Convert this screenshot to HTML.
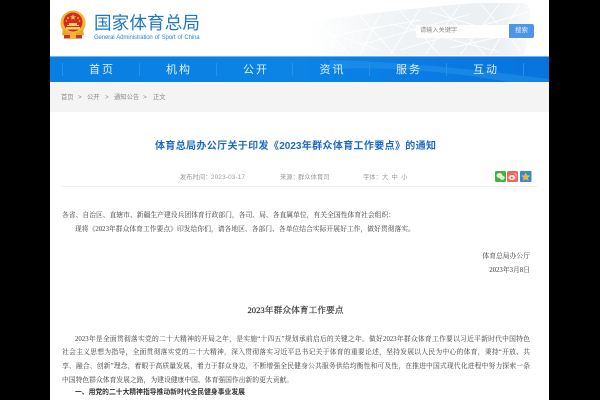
<!DOCTYPE html>
<html lang="zh"><head><meta charset="utf-8">
<style>
html,body{margin:0;padding:0;background:#000;width:600px;height:400px;overflow:hidden}
#p{position:absolute;left:50px;top:0;width:499px;height:400px;background:#fff;overflow:hidden}
.a{position:absolute;white-space:nowrap;line-height:1}
.s{font-family:"Liberation Sans","Noto Sans CJK SC",sans-serif}
.f{font-family:"Liberation Serif","Noto Serif CJK SC",serif;color:#3a3a3a;font-size:6.8px}
.j{text-align:justify;text-align-last:justify;white-space:normal}
.n{top:64.500px;width:40px;text-align:center;color:#e3f0fc;font-size:11px;letter-spacing:2px;text-indent:2px;font-family:"Liberation Sans","Noto Sans CJK SC",sans-serif}
.sep{position:absolute;top:63px;width:1px;height:13px;background:#2c91e6}
.b{top:94.500px;font-size:6.300px;color:#8a8a8a}
.m{top:174.500px;font-size:6.300px;color:#999}
</style></head><body>
<div id="p">
<svg class="a" style="left:250px;top:0" width="249" height="56" viewBox="0 0 249 56">
<defs><linearGradient id="g" x1="0" x2="1" y1="0" y2="0"><stop offset="0" stop-color="#fff"/><stop offset=".4" stop-color="#eff3f5"/><stop offset=".85" stop-color="#ebeff2"/><stop offset="1" stop-color="#f8f9fa"/></linearGradient></defs>
<path d="M8 22Q90 10 175 3L222 3Q232 4 230 18L224 55L10 55Z" fill="url(#g)"/>
<g stroke="#fff" stroke-width=".9" fill="none">
<path d="M20 24L50 55M40 20L30 55M60 16L95 55M80 14L60 55M100 11L140 55M120 9L90 55M140 7L185 55M160 5L125 55M180 3L220 50M200 3L160 55M220 4L190 55M30 36L120 20M60 45L170 14M100 50L228 12M150 48L230 30M20 30L80 50M90 24L200 52M130 12L225 40"/>
</g></svg>
<svg class="a" style="left:10px;top:10px" width="27" height="30" viewBox="0 0 27 30">
<circle cx="13" cy="13" r="12.500" fill="#f2b632"/><circle cx="13" cy="12" r="9.500" fill="#d8281f"/>
<path d="M13 4l.8 2.200h2.200l-1.800 1.400.7 2.200-1.900-1.300-1.900 1.300.7-2.200L10 6.200h2.200z" fill="#f7d14a"/>
<circle cx="8" cy="8" r=".9" fill="#f7d14a"/><circle cx="18" cy="8" r=".9" fill="#f7d14a"/><circle cx="6.500" cy="11" r=".7" fill="#f7d14a"/><circle cx="19.500" cy="11" r=".7" fill="#f7d14a"/>
<path d="M7 15h12v1H7zM9 13h8v2H9zM6 17h14v2.500H6z" fill="#f5d36b"/>
<path d="M3 19Q13 27 23 19L24 25Q13 29 2 25Z" fill="#e8a72c"/>
<path d="M4 25h18v3.500H4z" fill="#c9342a"/><rect x="10" y="23" width="6" height="6" fill="#eeb52f"/>
</svg>
<div class="a s" style="left:44px;top:15px;font-size:17.600px;color:#1d76c4;width:106px;text-align:justify;text-align-last:justify;white-space:normal;font-weight:400">国家体育总局</div>
<div class="a s" style="left:44px;top:34.500px;font-size:6px;color:#2f86cf;width:105.500px;text-align-last:justify;white-space:normal;letter-spacing:-.02em">General Administration of Sport of China</div>
<div class="a" style="left:366px;top:25px;width:93px;height:13px;background:#fff;border-radius:2px 0 0 2px"></div>
<div class="a s" style="left:370px;top:28px;font-size:6.200px;color:#8a8a8a">请输入关键字</div>
<div class="a s" style="left:459px;top:24px;width:25px;height:14px;background:#4e95e6;border-radius:0 2px 2px 0;color:#dfeefc;font-size:6.500px;line-height:14px;text-align:center">搜索</div>

<div class="a" style="left:0;top:56px;width:499px;height:26px;background:linear-gradient(90deg,#0a7fe2,#0b84e6 50%,#0873de);border-top:1px solid #6db8ef;box-sizing:border-box"></div>
<svg class="a" style="left:280px;top:57px" width="219" height="25" viewBox="0 0 219 25"><path d="M0 3Q90 5 219 22V25H180Q80 8 0 12Z" fill="#2c97ea" opacity=".45"/></svg>
<div class="sep" style="left:12px"></div><div class="sep" style="left:89px"></div><div class="sep" style="left:166px"></div><div class="sep" style="left:242px"></div><div class="sep" style="left:319px"></div><div class="sep" style="left:396px"></div><div class="sep" style="left:473px"></div>
<div class="a n" style="left:31px">首页</div><div class="a n" style="left:108px">机构</div><div class="a n" style="left:185px">公开</div><div class="a n" style="left:261.500px">资讯</div><div class="a n" style="left:338px">服务</div><div class="a n" style="left:415px">互动</div>

<div class="a" style="left:0;top:82px;width:499px;height:30px;background:#f4f4f4"></div>
<div class="a s b" style="left:11px">首页</div><div class="a s b" style="left:28px">&gt;</div><div class="a s b" style="left:37px">公开</div><div class="a s b" style="left:55px">&gt;</div><div class="a s b" style="left:64px">通知公告</div><div class="a s b" style="left:93px">&gt;</div><div class="a s b" style="left:103px">正文</div>

<div class="a s" style="left:105px;top:141.500px;width:281px;font-size:10px;font-weight:700;color:#1c69c4;white-space:normal;text-align:justify;text-align-last:justify">体育总局办公厅关于印发《2023年群众体育工作要点》的通知</div>
<div class="a s m" style="left:130px;top:174.500px">发布时间：</div><div class="a s m" style="left:161px;letter-spacing:.2px">2023-03-17</div>
<div class="a s m" style="left:230px">来源：</div><div class="a s m" style="left:248px">群众体育司</div>
<div class="a s m" style="left:313px">字体：</div><div class="a s m" style="left:332px;word-spacing:1.500px">大 中 小</div>
<svg class="a" style="left:445px;top:171px" width="37" height="12" viewBox="0 0 37 12">
<rect x="0" y="0" width="11" height="11" rx="1.500" fill="#3fb63a"/><ellipse cx="4.500" cy="4.500" rx="3" ry="2.400" fill="#e8f8e6"/><ellipse cx="7.200" cy="6.800" rx="2.500" ry="2" fill="#e8f8e6"/>
<rect x="12" y="0" width="11" height="11" rx="1.500" fill="#f2675f"/><ellipse cx="17" cy="6.500" rx="3.500" ry="2.500" fill="#fde3df"/><circle cx="16.800" cy="6.700" r="1" fill="#e8534b"/><path d="M19.500 2.500q2 .2 1.800 2.500" stroke="#fde3df" fill="none" stroke-width=".8"/>
<rect x="25" y="0" width="11.500" height="11" rx="1" fill="#2b8ce0"/><path d="M30.700 1.200l1.400 3 3.200.4-2.400 2.100.7 3.200-2.900-1.700-2.900 1.700.7-3.200-2.400-2.100 3.200-.4z" fill="#f3b52c"/>
</svg>
<div class="a" style="left:11px;top:186px;width:477px;height:1px;background:#f2f2f2"></div>

<div class="a f" style="left:12px;top:212.500px">各省、自治区、直辖市、新疆生产建设兵团体育行政部门，各司、局、各直属单位，有关全国性体育社会组织：</div>
<div class="a f" style="left:25px;top:226.500px">现将《2023年群众体育工作要点》印发给你们，请各地区、各部门、各单位结合实际开展好工作，做好贯彻落实。</div>
<div class="a f" style="right:19px;top:253.500px">体育总局办公厅</div>
<div class="a f" style="right:19px;top:267.500px">2023年3月8日</div>
<div class="a f" style="left:197.500px;top:306px;font-size:8.600px;font-weight:400;-webkit-text-stroke:.2px #333;color:#333;width:96px;white-space:normal;text-align-last:justify">2023年群众体育工作要点</div>
<div class="a f j" style="left:25px;top:336.500px;width:455px">2023年是全面贯彻落实党的二十大精神的开局之年，是实施“十四五”规划承前启后的关键之年。做好2023年群众体育工作要以习近平新时代中国特色</div>
<div class="a f j" style="left:12px;top:350px;width:468px">社会主义思想为指导，全面贯彻落实党的二十大精神，深入贯彻落实习近平总书记关于体育的重要论述，坚持发展以人民为中心的体育，秉持“开放、共</div>
<div class="a f j" style="left:12px;top:364px;width:468px">享、融合、创新”理念，着眼于高质量发展，着力于群众身边，不断增强全民健身公共服务供给均衡性和可及性，在推进中国式现代化进程中努力探索一条</div>
<div class="a f" style="left:12px;top:377.500px">中国特色群众体育发展之路，为建设健康中国、体育强国作出新的更大贡献。</div>
<div class="a s" style="left:25px;top:390px;font-size:6.800px;font-weight:700;color:#333">一、用党的二十大精神指导推动新时代全民健身事业发展</div>
</div>
</body></html>
